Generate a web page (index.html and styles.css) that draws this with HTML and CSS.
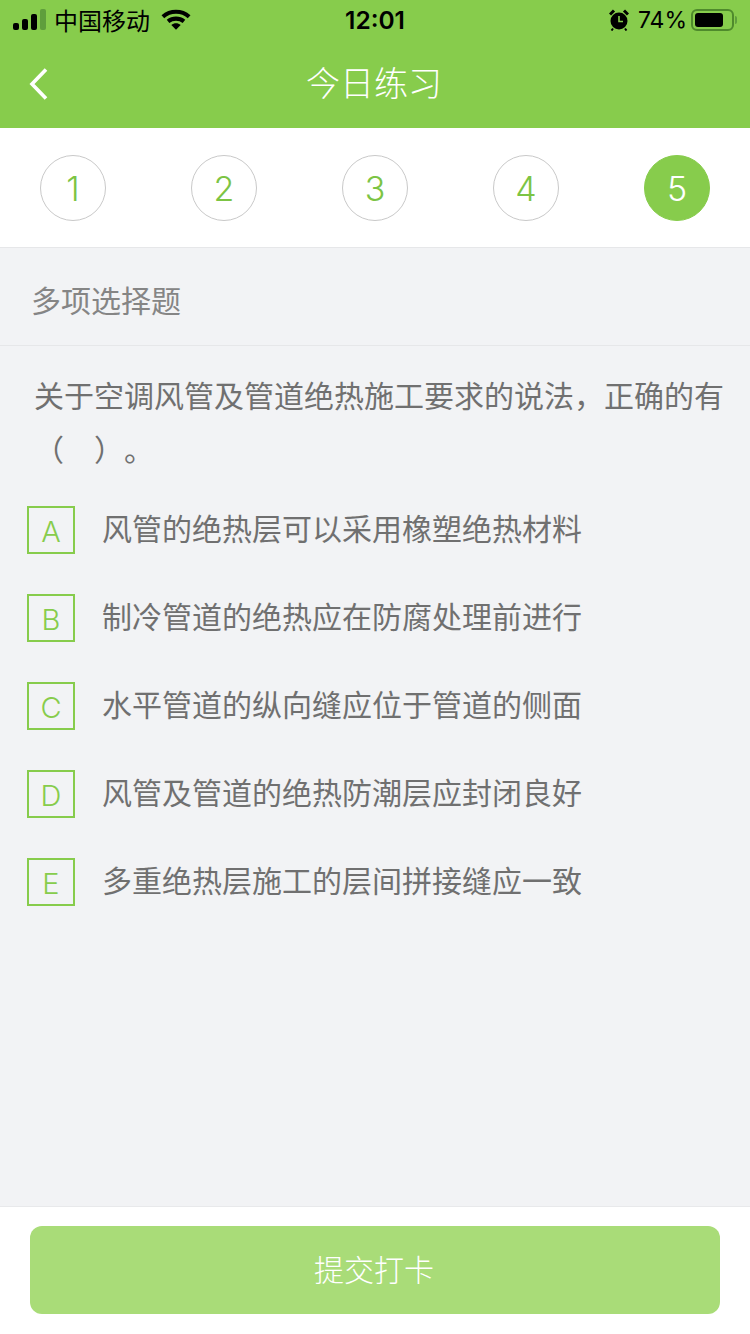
FILE: index.html
```html
<!DOCTYPE html>
<html lang="zh-CN">
  <head>
    <meta charset="UTF-8" />
    <title>今日练习</title>
    <link rel="stylesheet" href="styles.css">
  </head>
  <body>
    <div class="page">
      <header class="top">
        <div class="status">
          <div class="status-left">
            <svg class="signal" width="34" height="24" viewBox="0 0 34 24">
              <rect x="0" y="15" width="6" height="7" rx="2" fill="#000" />
              <rect x="9" y="11" width="6" height="11" rx="2" fill="#000" />
              <rect x="18" y="6" width="6" height="16" rx="2" fill="#000" />
              <rect x="27" y="1" width="6" height="21" rx="2" fill="#5f9e3c" />
            </svg>
            <span class="carrier">中国移动</span>
            <svg class="wifi" width="30" height="24" viewBox="0 0 32 24">
              <path d="M2 8.5C10 1.5 22 1.5 30 8.5" fill="none" stroke="#000" stroke-width="4.4" />
              <path d="M7.5 13.5C12.5 9.5 19.5 9.5 24.5 13.5" fill="none" stroke="#000" stroke-width="4.4" />
              <path d="M11 17.2C14 14.8 18 14.8 21 17.2L16 22.5Z" fill="#000" />
            </svg>
          </div>
          <div class="time">12:01</div>
          <div class="status-right">
            <svg class="alarm" width="20" height="22" viewBox="0 0 20 22">
              <circle cx="10" cy="12" r="8.5" fill="#000" />
              <path d="M10 7V12.5H14" fill="none" stroke="#87cc4c" stroke-width="1.6" />
              <path d="M1 5.5L5 1.5M19 5.5L15 1.5" stroke="#000" stroke-width="3" />
              <path d="M4 19.5L2.5 21.5M16 19.5L17.5 21.5" stroke="#000" stroke-width="2" />
            </svg>
            <span class="percent">74%</span>
            <div class="battery">
              <div class="battery-body"><div class="battery-level"></div></div>
              <div class="battery-tip"></div>
            </div>
          </div>
        </div>
        <div class="nav">
          <svg class="back" width="20" height="32" viewBox="0 0 20 32">
            <path d="M17 1.5L3 16L17 30.5" fill="none" stroke="#fff" stroke-width="3.6" />
          </svg>
          <h1 class="nav-title">今日练习</h1>
        </div>
      </header>

      <div class="steps">
        <div class="step">1</div>
        <div class="step">2</div>
        <div class="step">3</div>
        <div class="step">4</div>
        <div class="step step-on">5</div>
      </div>

      <main class="content">
        <div class="type">多项选择题</div>
        <p class="question">关于空调风管及管道绝热施工要求的说法，正确的有（　）。</p>
        <ul class="options">
          <li class="option"><span class="letter">A</span><span class="option-text">风管的绝热层可以采用橡塑绝热材料</span></li>
          <li class="option"><span class="letter">B</span><span class="option-text">制冷管道的绝热应在防腐处理前进行</span></li>
          <li class="option"><span class="letter">C</span><span class="option-text">水平管道的纵向缝应位于管道的侧面</span></li>
          <li class="option"><span class="letter">D</span><span class="option-text">风管及管道的绝热防潮层应封闭良好</span></li>
          <li class="option"><span class="letter">E</span><span class="option-text">多重绝热层施工的层间拼接缝应一致</span></li>
        </ul>
      </main>

      <footer class="bottom">
        <button class="submit" type="button">提交打卡</button>
      </footer>
    </div>
  </body>
</html>
```

FILE: styles.css
```css
* {
  box-sizing: border-box;
}
html,
body {
  margin: 0;
  padding: 0;
}
body {
  font-family: "Noto Sans CJK SC", sans-serif;
  background: #f2f3f5;
}
.page {
  width: 750px;
  height: 1334px;
  display: flex;
  flex-direction: column;
  overflow: hidden;
}

.top {
  height: 128px;
  background: #87cc4c;
}
.status {
  height: 40px;
  padding: 0 13px 0 13px;
  display: grid;
  grid-template-columns: 1fr auto 1fr;
  align-items: center;
  color: #000;
  font-size: 24px;
}
.status-left,
.status-right {
  display: flex;
  align-items: center;
}
.status-right {
  justify-content: flex-end;
}
.signal {
  margin-right: 7px;
}
.carrier {
  margin-right: 11px;
  line-height: 40px;
}
.time {
  font-family: Inter, sans-serif;
  font-weight: 600;
  font-size: 24.5px;
}
.percent {
  font-family: Inter, sans-serif;
  font-size: 23px;
  margin-left: 9px;
  margin-right: 4px;
}
.battery {
  display: flex;
  align-items: center;
}
.battery-body {
  width: 43px;
  height: 22px;
  border: 2px solid #4f8a2c;
  border-radius: 6px;
  padding: 2px;
}
.battery-level {
  width: 28px;
  height: 14px;
  background: #000;
  border-radius: 3px;
}
.battery-tip {
  width: 2px;
  height: 8px;
  margin-left: 1px;
  background: #5f9e3c;
  border-radius: 0 2px 2px 0;
}

.nav {
  height: 88px;
  display: flex;
  align-items: center;
  justify-content: center;
  position: relative;
}
.back {
  position: absolute;
  left: 29px;
  top: 28px;
}
.nav-title {
  margin: 0 2px 5px 0;
  color: #fff;
  font-size: 34px;
  font-weight: 300;
}

.steps {
  height: 120px;
  padding: 1px 40px 0;
  background: #fff;
  border-bottom: 1px solid #e6e7e9;
  display: flex;
  align-items: center;
  justify-content: space-between;
}
.step {
  width: 66px;
  height: 66px;
  border: 1px solid #c9c9c9;
  border-radius: 50%;
  display: flex;
  align-items: center;
  justify-content: center;
  font-family: Inter, sans-serif;
  font-size: 34px;
  font-weight: 350;
  color: #7cc444;
}
.step-on {
  border-color: #87cc4c;
  background: #87cc4c;
  color: #fff;
}

.content {
  flex: 1;
}
.type {
  height: 98px;
  padding: 4px 31px 0;
  border-bottom: 1px solid #e6e7e9;
  display: flex;
  align-items: center;
  font-size: 30px;
  color: #858585;
}
.question {
  margin: 0;
  padding: 21px 20px 0 34px;
  font-size: 30px;
  line-height: 54px;
  color: #707070;
  text-spacing-trim: space-all;
}
.options {
  list-style: none;
  margin: 0;
  padding: 31px 0 0 27px;
}
.option {
  height: 88px;
  display: flex;
  align-items: flex-start;
}
.letter {
  width: 48px;
  height: 48px;
  padding-top: 2px;
  border: 2px solid #87cc4c;
  display: flex;
  align-items: center;
  justify-content: center;
  font-family: Inter, sans-serif;
  font-size: 29px;
  font-weight: 350;
  color: #87cc4c;
}
.option-text {
  margin-left: 27px;
  font-size: 30px;
  line-height: 42px;
  color: #707070;
}

.bottom {
  height: 128px;
  padding: 19px 30px 0;
  background: #fff;
  border-top: 1px solid #e8e9eb;
}
.submit {
  display: block;
  width: 100%;
  height: 88px;
  padding: 0 2px 4px 0;
  border: 0;
  border-radius: 12px;
  background: #a9dc78;
  color: #fff;
  font-family: "Noto Sans CJK SC", sans-serif;
  font-size: 30px;
  font-weight: 300;
}
```
